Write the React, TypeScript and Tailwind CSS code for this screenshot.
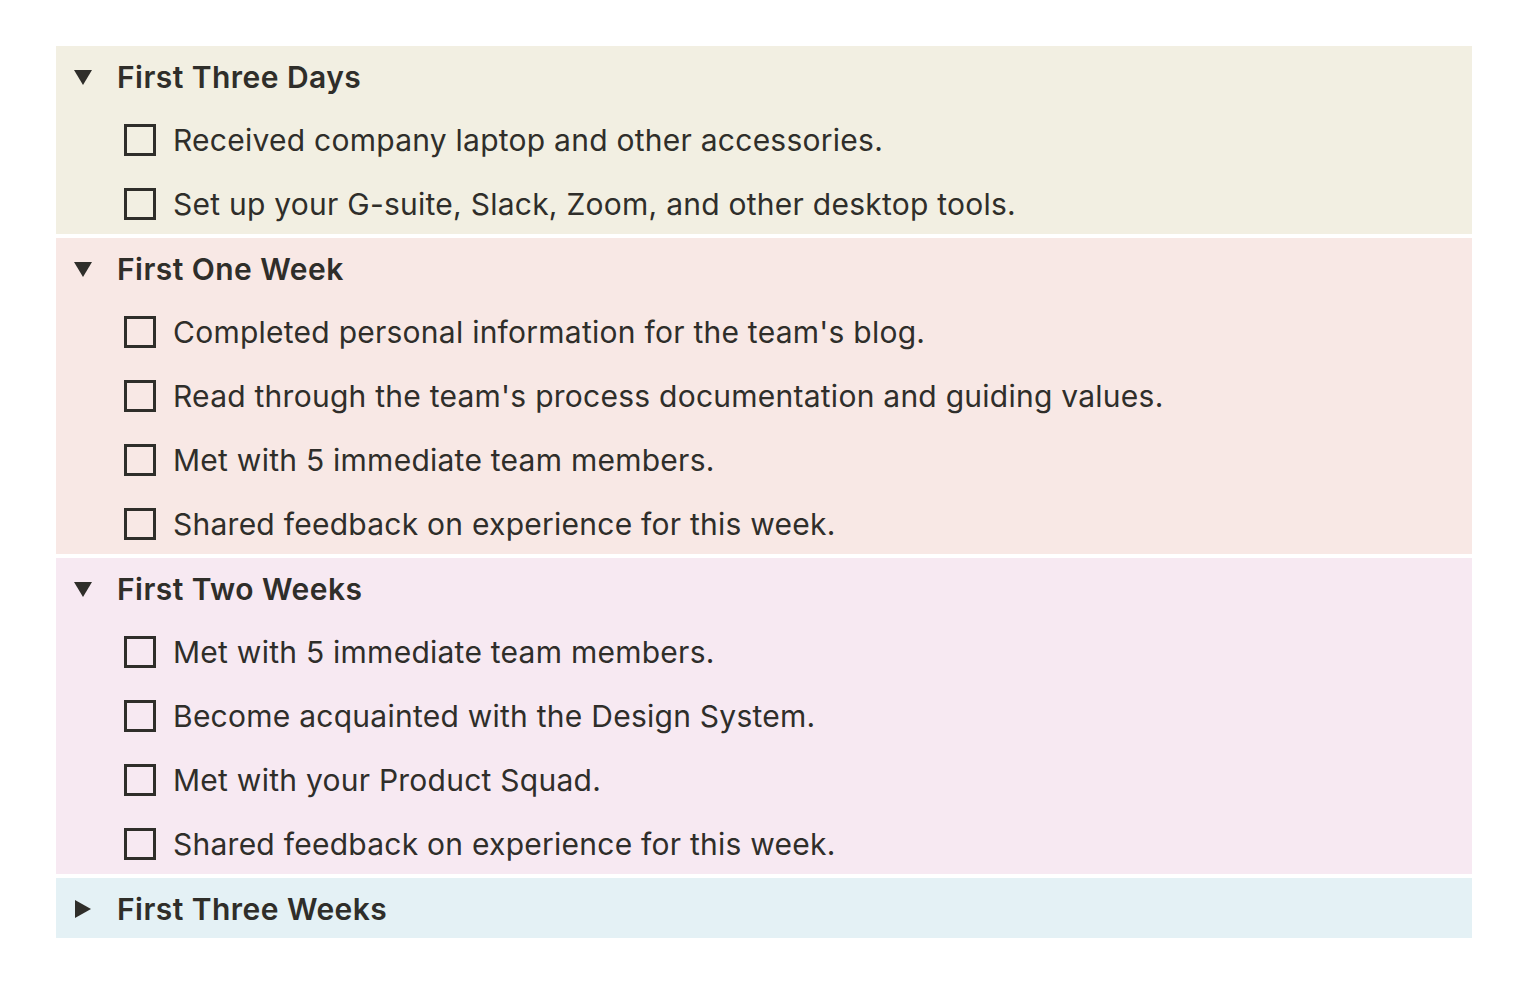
import React from "react";

type Section = {
  title: string;
  open: boolean;
  bg: string;
  items: string[];
};

const sections: Section[] = [
  {
    title: "First Three Days",
    open: true,
    bg: "bg-[#f2efe2]",
    items: [
      "Received company laptop and other accessories.",
      "Set up your G-suite, Slack, Zoom, and other desktop tools.",
    ],
  },
  {
    title: "First One Week",
    open: true,
    bg: "bg-[#f8e8e5]",
    items: [
      "Completed personal information for the team's blog.",
      "Read through the team's process documentation and guiding values.",
      "Met with 5 immediate team members.",
      "Shared feedback on experience for this week.",
    ],
  },
  {
    title: "First Two Weeks",
    open: true,
    bg: "bg-[#f7e9f2]",
    items: [
      "Met with 5 immediate team members.",
      "Become acquainted with the Design System.",
      "Met with your Product Squad.",
      "Shared feedback on experience for this week.",
    ],
  },
  {
    title: "First Three Weeks",
    open: false,
    bg: "bg-[#e4f1f5]",
    items: [],
  },
];

function Caret({ open }: { open: boolean }) {
  return (
    <svg width="18" height="18" viewBox="0 0 18 18" className="shrink-0">
      {open ? (
        <polygon points="0,2 18,2 9,17" fill="#2f2e2a" />
      ) : (
        <polygon points="1,0 17,9 1,18" fill="#2f2e2a" />
      )}
    </svg>
  );
}

export default function App() {
  return (
    <div
      className="min-h-screen bg-white pt-[46px] pl-[56px] text-[#2f2e2a]"
      style={{ fontFamily: "Inter, 'Noto Sans', sans-serif" }}
    >
      <div className="w-[1416px] flex flex-col gap-[4px]">
        {sections.map((s) => (
          <div key={s.title} className={s.bg}>
            <div className="h-[60px] flex items-center pl-[18px] pt-[1px]">
              <Caret open={s.open} />
              <span className="ml-[25px] text-[30px] font-semibold leading-none tracking-[0.45px]">
                {s.title}
              </span>
            </div>
            {s.open &&
              s.items.map((item, i) => (
                <div key={i} className="h-[64px] flex items-center pl-[68px] pt-[3px]">
                  <div className="w-[32px] h-[32px] border-[3px] border-[#2f2e2a] shrink-0" />
                  <span className="ml-[17px] text-[30px] leading-none tracking-[0.25px]">{item}</span>
                </div>
              ))}
          </div>
        ))}
      </div>
    </div>
  );
}
